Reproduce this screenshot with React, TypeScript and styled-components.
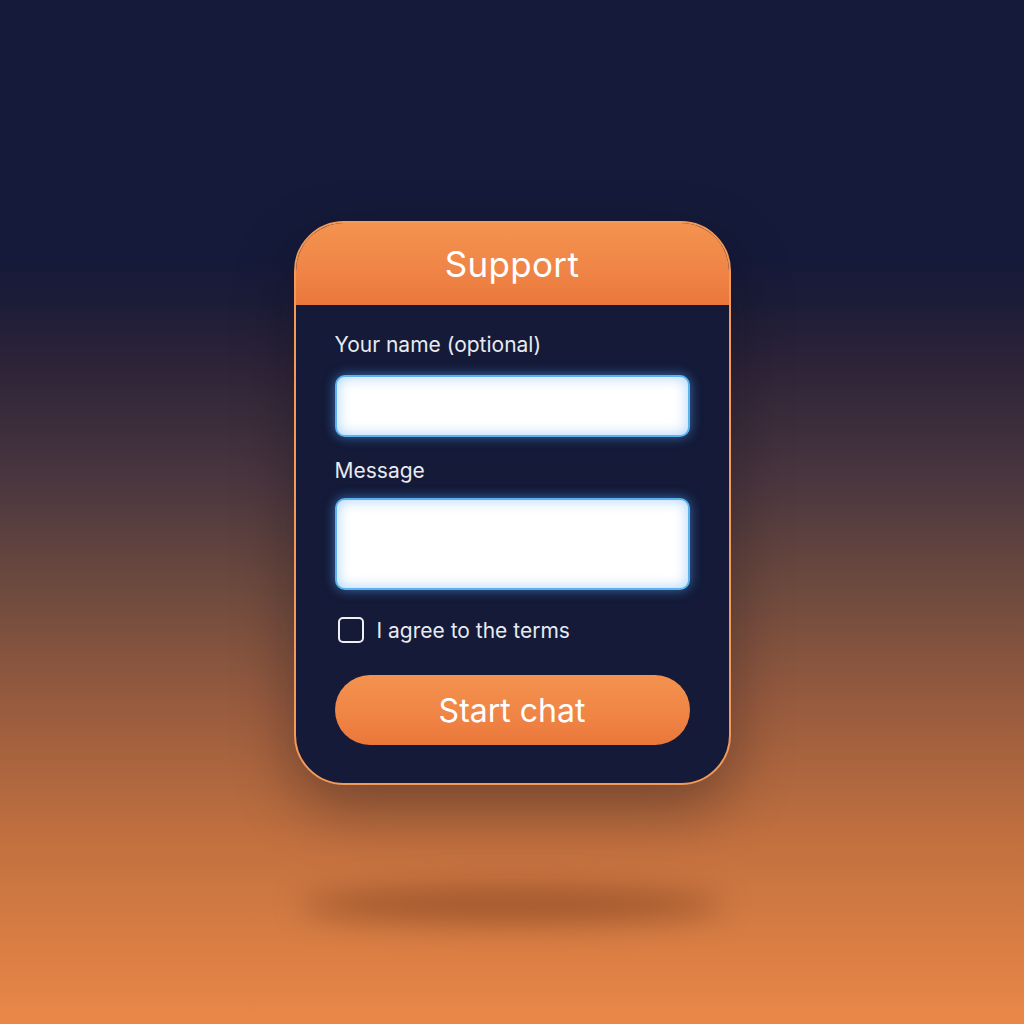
import styled, { createGlobalStyle } from "styled-components";

const GlobalStyle = createGlobalStyle`
  html, body {
    margin: 0;
    padding: 0;
  }
  body {
    font-family: Inter, "Noto Sans", "Liberation Sans", sans-serif;
  }
`;

const App = () => {
  return (
    <>
      <GlobalStyle />
      <Page>
        <Card>
          <Header>
            <Title>Support</Title>
          </Header>
          <Body>
            <Label htmlFor="name">Your name (optional)</Label>
            <Input id="name" type="text" />
            <Label htmlFor="message" $top={20}>
              Message
            </Label>
            <TextArea id="message" />
            <CheckRow>
              <CheckBox type="checkbox" />
              <CheckText>I agree to the terms</CheckText>
            </CheckRow>
            <StartButton type="button">Start chat</StartButton>
          </Body>
        </Card>
      </Page>
    </>
  );
};

const Page = styled.div`
  position: relative;
  isolation: isolate;
  min-height: 1024px;
  box-sizing: border-box;
  padding-top: 221px;
  display: flex;
  flex-direction: column;
  align-items: center;
  background: linear-gradient(
    180deg,
    #151a3a 0px,
    #151a3a 260px,
    #1c1c38 300px,
    #2c2338 360px,
    #4a363f 480px,
    #6e4a3e 590px,
    #9a5c3e 710px,
    #c2703f 840px,
    #ea8848 1024px
  );
  overflow: hidden;
`;

const Card = styled.div`
  position: relative;
  width: 437px;
  box-sizing: border-box;
  border: 2px solid #f39a58;
  border-radius: 50px;
  background: #141a38;
  box-shadow: 0 24px 60px rgba(10, 8, 20, 0.35);

  &::after {
    content: "";
    position: absolute;
    left: 5px;
    right: 5px;
    bottom: -140px;
    height: 36px;
    border-radius: 50%;
    background: rgba(120, 60, 30, 0.55);
    filter: blur(15px);
    z-index: -1;
  }
`;

const Header = styled.div`
  height: 82px;
  border-radius: 48px 48px 0 0;
  background: linear-gradient(180deg, #f4934f 0%, #ef8446 60%, #ea773b 100%);
  display: flex;
  align-items: center;
  justify-content: center;
`;

const Title = styled.h1`
  margin: 0;
  font-size: 35px;
  font-weight: 400;
  color: #ffffff;
  letter-spacing: 0.3px;
`;

const Body = styled.div`
  padding: 26px 39px 38px;
  display: flex;
  flex-direction: column;
`;

const Label = styled.label<{ $top?: number }>`
  display: block;
  margin-top: ${(p) => p.$top ?? 0}px;
  font-size: 21px;
  line-height: 27px;
  color: #e8eaf2;
`;

const fieldStyle = `
  width: 100%;
  box-sizing: border-box;
  border: 2px solid #5cb2ee;
  border-radius: 10px;
  background: #ffffff;
  box-shadow: 0 0 12px rgba(80, 165, 245, 0.6),
    inset 0 0 14px rgba(110, 180, 245, 0.6);
  outline: none;
  font-family: inherit;
  font-size: 18px;
  padding: 0 14px;
`;

const Input = styled.input`
  ${fieldStyle}
  margin-top: 17px;
  height: 62px;
`;

const TextArea = styled.textarea`
  ${fieldStyle}
  margin-top: 14px;
  height: 92px;
  resize: none;
  display: block;
`;

const CheckRow = styled.label`
  margin-top: 27px;
  display: flex;
  align-items: center;
  gap: 13px;
  padding-left: 3px;
`;

const CheckBox = styled.input`
  appearance: none;
  margin: 0;
  width: 26px;
  height: 26px;
  box-sizing: border-box;
  border: 2px solid #eef0f6;
  border-radius: 5px;
  background: transparent;
`;

const CheckText = styled.span`
  font-size: 21px;
  color: #e8eaf2;
`;

const StartButton = styled.button`
  margin-top: 32px;
  height: 70px;
  width: 100%;
  border: none;
  border-radius: 35px;
  background: linear-gradient(180deg, #f4924f 0%, #ef8445 60%, #ea773a 100%);
  color: #ffffff;
  font-family: inherit;
  font-size: 32px;
  font-weight: 400;
  cursor: pointer;
`;

export default App;
